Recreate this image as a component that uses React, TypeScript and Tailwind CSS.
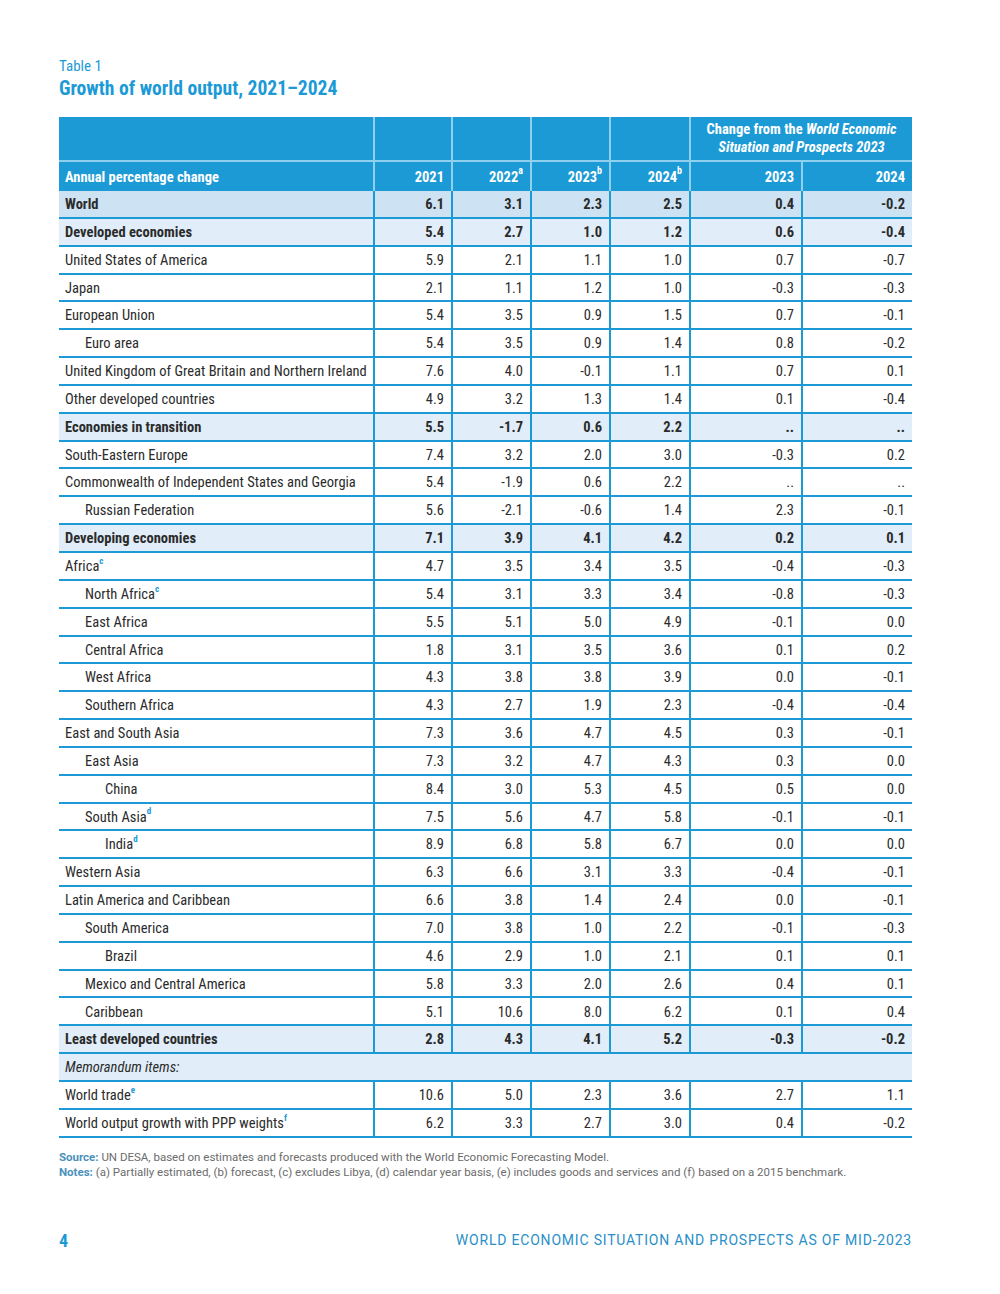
type Row = {
  label: string;
  sup?: string;
  indent?: number;
  bold?: boolean;
  bg?: "dark" | "light";
  values: string[];
};

const rows: Row[] = [
  { label: "World", bold: true, bg: "dark", values: ["6.1", "3.1", "2.3", "2.5", "0.4", "-0.2"] },
  { label: "Developed economies", bold: true, bg: "light", values: ["5.4", "2.7", "1.0", "1.2", "0.6", "-0.4"] },
  { label: "United States of America", values: ["5.9", "2.1", "1.1", "1.0", "0.7", "-0.7"] },
  { label: "Japan", values: ["2.1", "1.1", "1.2", "1.0", "-0.3", "-0.3"] },
  { label: "European Union", values: ["5.4", "3.5", "0.9", "1.5", "0.7", "-0.1"] },
  { label: "Euro area", indent: 1, values: ["5.4", "3.5", "0.9", "1.4", "0.8", "-0.2"] },
  { label: "United Kingdom of Great Britain and Northern Ireland", values: ["7.6", "4.0", "-0.1", "1.1", "0.7", "0.1"] },
  { label: "Other developed countries", values: ["4.9", "3.2", "1.3", "1.4", "0.1", "-0.4"] },
  { label: "Economies in transition", bold: true, bg: "light", values: ["5.5", "-1.7", "0.6", "2.2", "..", ".."] },
  { label: "South-Eastern Europe", values: ["7.4", "3.2", "2.0", "3.0", "-0.3", "0.2"] },
  { label: "Commonwealth of Independent States and Georgia", values: ["5.4", "-1.9", "0.6", "2.2", "..", ".."] },
  { label: "Russian Federation", indent: 1, values: ["5.6", "-2.1", "-0.6", "1.4", "2.3", "-0.1"] },
  { label: "Developing economies", bold: true, bg: "light", values: ["7.1", "3.9", "4.1", "4.2", "0.2", "0.1"] },
  { label: "Africa", sup: "c", values: ["4.7", "3.5", "3.4", "3.5", "-0.4", "-0.3"] },
  { label: "North Africa", sup: "c", indent: 1, values: ["5.4", "3.1", "3.3", "3.4", "-0.8", "-0.3"] },
  { label: "East Africa", indent: 1, values: ["5.5", "5.1", "5.0", "4.9", "-0.1", "0.0"] },
  { label: "Central Africa", indent: 1, values: ["1.8", "3.1", "3.5", "3.6", "0.1", "0.2"] },
  { label: "West Africa", indent: 1, values: ["4.3", "3.8", "3.8", "3.9", "0.0", "-0.1"] },
  { label: "Southern Africa", indent: 1, values: ["4.3", "2.7", "1.9", "2.3", "-0.4", "-0.4"] },
  { label: "East and South Asia", values: ["7.3", "3.6", "4.7", "4.5", "0.3", "-0.1"] },
  { label: "East Asia", indent: 1, values: ["7.3", "3.2", "4.7", "4.3", "0.3", "0.0"] },
  { label: "China", indent: 2, values: ["8.4", "3.0", "5.3", "4.5", "0.5", "0.0"] },
  { label: "South Asia", sup: "d", indent: 1, values: ["7.5", "5.6", "4.7", "5.8", "-0.1", "-0.1"] },
  { label: "India", sup: "d", indent: 2, values: ["8.9", "6.8", "5.8", "6.7", "0.0", "0.0"] },
  { label: "Western Asia", values: ["6.3", "6.6", "3.1", "3.3", "-0.4", "-0.1"] },
  { label: "Latin America and Caribbean", values: ["6.6", "3.8", "1.4", "2.4", "0.0", "-0.1"] },
  { label: "South America", indent: 1, values: ["7.0", "3.8", "1.0", "2.2", "-0.1", "-0.3"] },
  { label: "Brazil", indent: 2, values: ["4.6", "2.9", "1.0", "2.1", "0.1", "0.1"] },
  { label: "Mexico and Central America", indent: 1, values: ["5.8", "3.3", "2.0", "2.6", "0.4", "0.1"] },
  { label: "Caribbean", indent: 1, values: ["5.1", "10.6", "8.0", "6.2", "0.1", "0.4"] },
  { label: "Least developed countries", bold: true, bg: "light", values: ["2.8", "4.3", "4.1", "5.2", "-0.3", "-0.2"] },
];

const memo: Row[] = [
  { label: "World trade", sup: "e", values: ["10.6", "5.0", "2.3", "3.6", "2.7", "1.1"] },
  { label: "World output growth with PPP weights", sup: "f", values: ["6.2", "3.3", "2.7", "3.0", "0.4", "-0.2"] },
];

const cols = "grid grid-cols-[314px_78px_79px_79px_80px_112px_111px]";

function DataRow({ row }: { row: Row }) {
  const bg = row.bg === "dark" ? "bg-[#cde2f3]" : row.bg === "light" ? "bg-[#e1eef9]" : "bg-white";
  const pad = row.indent === 2 ? "pl-[46px]" : row.indent === 1 ? "pl-[26px]" : "pl-[6px]";
  return (
    <div className={`${cols} h-[27.85px] border-b-2 border-[#1c9ad6] ${bg} ${row.bold ? "font-bold" : ""}`}>
      <div className={`flex items-center pt-[2px] ${pad}`}>
        {row.label}
        {row.sup && <sup className="text-[9px] font-bold text-[#1c9ad6] -mt-[3px]">{row.sup}</sup>}
      </div>
      {row.values.map((v, i) => (
        <div key={i} className="flex items-center justify-end pt-[2px] pr-[7px] border-l-2 border-[#1c9ad6]">
          {v}
        </div>
      ))}
    </div>
  );
}

export default function App() {
  return (
    <div className="w-[1000px] h-[1294px] bg-white px-[59px] pt-[56px] text-[#2b2b2b] font-['Roboto_Condensed','Liberation_Sans_Narrow','Roboto',sans-serif]">
      <div className="text-[15px] leading-[20px] text-[#1c9ad6]">Table 1</div>
      <h1 className="text-[19.6px] leading-[26px] font-bold text-[#1c9ad6]">Growth of world output, 2021–2024</h1>

      <div className="mt-[15px] w-[853px] text-[14.5px]">
        <div className="bg-[#1c9ad6] text-white font-bold">
          <div className={`${cols} h-[45px] border-b-2 border-[#8fd0ef]`}>
            <div />
            <div className="border-l-2 border-[#8fd0ef]" />
            <div className="border-l-2 border-[#8fd0ef]" />
            <div className="border-l-2 border-[#8fd0ef]" />
            <div className="border-l-2 border-[#8fd0ef]" />
            <div className="col-span-2 border-l-2 border-[#8fd0ef] flex flex-col items-center justify-center leading-[18px] text-[14.5px]">
              <div>
                Change from the <i>World Economic</i>
              </div>
              <div>
                <i>Situation and Prospects 2023</i>
              </div>
            </div>
          </div>
          <div className={`${cols} h-[29px]`}>
            <div className="flex items-center pt-[2px] pl-[6px]">Annual percentage change</div>
            <div className="flex items-center justify-end pt-[2px] pr-[7px] border-l-2 border-[#8fd0ef]">2021</div>
            <div className="flex items-center justify-end pt-[2px] pr-[7px] border-l-2 border-[#8fd0ef]">
              2022<sup className="text-[10px] -mt-[3px]">a</sup>
            </div>
            <div className="flex items-center justify-end pt-[2px] pr-[7px] border-l-2 border-[#8fd0ef]">
              2023<sup className="text-[10px] -mt-[3px]">b</sup>
            </div>
            <div className="flex items-center justify-end pt-[2px] pr-[7px] border-l-2 border-[#8fd0ef]">
              2024<sup className="text-[10px] -mt-[3px]">b</sup>
            </div>
            <div className="flex items-center justify-end pt-[2px] pr-[7px] border-l-2 border-[#8fd0ef]">2023</div>
            <div className="flex items-center justify-end pt-[2px] pr-[7px] border-l-2 border-[#8fd0ef]">2024</div>
          </div>
        </div>

        {rows.map((r) => (
          <DataRow key={r.label} row={r} />
        ))}
        <div className="h-[27.85px] border-b-2 border-[#1c9ad6] bg-[#e1eef9] flex items-center pt-[2px] pl-[6px] italic">
          Memorandum items:
        </div>
        {memo.map((r) => (
          <DataRow key={r.label} row={r} />
        ))}
      </div>

      <div className="mt-[12px] text-[11.5px] leading-[15px] text-[#6b6b6b] font-['Roboto',sans-serif]">
        <div>
          <span className="font-bold text-[#4a90bd]">Source:</span> UN DESA, based on estimates and forecasts produced with the World Economic Forecasting Model.
        </div>
        <div>
          <span className="font-bold text-[#4a90bd]">Notes:</span> (a) Partially estimated, (b) forecast, (c) excludes Libya, (d) calendar year basis, (e) includes goods and services and (f) based on a 2015 benchmark.
        </div>
      </div>

      <div className="mt-[47px] w-[853px] flex items-center justify-between">
        <span className="text-[18px] font-bold text-[#1c9ad6]">4</span>
        <span className="text-[14px] tracking-[0.8px] text-[#2a8fc8] font-['Roboto',sans-serif]">WORLD ECONOMIC SITUATION AND PROSPECTS AS OF MID-2023</span>
      </div>
    </div>
  );
}
